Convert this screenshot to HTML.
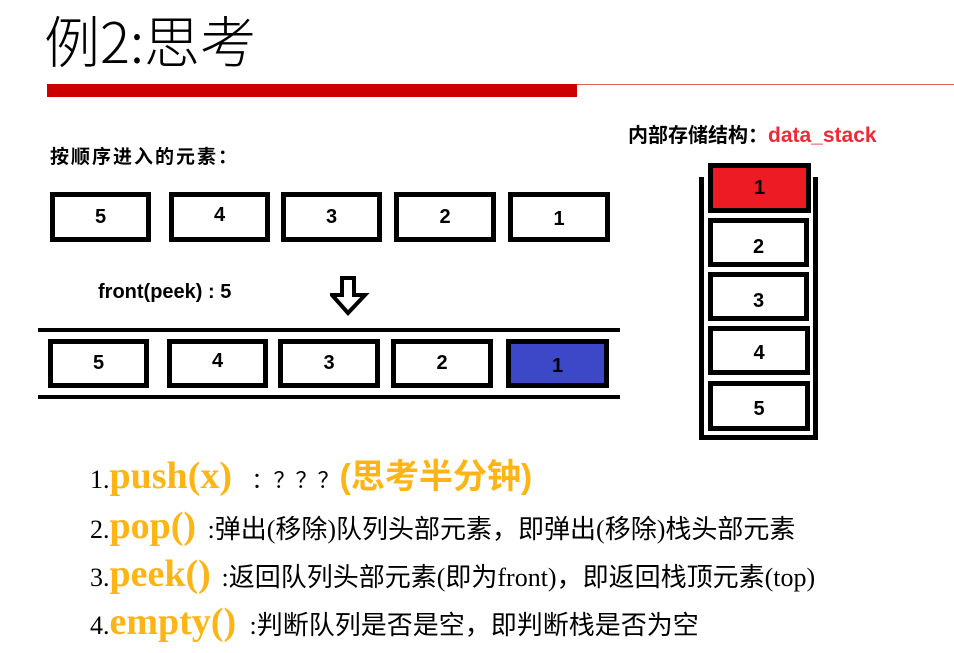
<!DOCTYPE html>
<html><head><meta charset="utf-8"><style>
body{margin:0;width:954px;height:653px;background:#fff;position:relative;overflow:hidden;font-family:"Liberation Sans","Noto Sans CJK SC",sans-serif}
.a{position:absolute}
.b{position:absolute;box-sizing:border-box;border:5px solid #000;background:#fff;text-align:center;font-weight:bold;font-size:20px;font-family:"Liberation Sans",sans-serif}
.l{position:absolute;background:#000}
.t{position:absolute;white-space:nowrap;font-family:"Liberation Serif","Noto Sans CJK SC",sans-serif;font-size:26px;color:#000}
.o{color:#fdb515;font-weight:bold;font-family:"Liberation Serif",serif;display:inline-block}
</style></head><body>
<div class="a" style="left:44px;top:-1px;font-size:56px;font-family:'Noto Sans CJK SC',sans-serif;font-weight:300">例2:思考</div>
<div class="a" style="left:47px;top:84px;width:530px;height:13px;background:#cc0000"></div>
<div class="a" style="left:577px;top:84px;width:377px;height:1px;background:#e06060"></div>
<div class="a" style="left:50px;top:142px;font-size:19px;font-weight:bold;letter-spacing:2px">按顺序进入的元素：</div>

<div class="b" style="left:50px;top:192px;width:101px;height:50px;line-height:40px">5</div>
<div class="b" style="left:169px;top:192px;width:101px;height:50px;line-height:36px">4</div>
<div class="b" style="left:281px;top:192px;width:101px;height:50px;line-height:40px">3</div>
<div class="b" style="left:394px;top:192px;width:102px;height:50px;line-height:40px">2</div>
<div class="b" style="left:508px;top:192px;width:102px;height:50px;line-height:44px">1</div>

<div class="a" style="left:98px;top:281px;font-size:20px;font-weight:bold">front(peek) : 5</div>
<svg class="a" style="left:330px;top:275px" width="44" height="42"><path d="M12 3 H24 V20 H35 L18 38 L2 20 H12 Z" fill="#fff" stroke="#000" stroke-width="4" stroke-linejoin="miter"/></svg>

<div class="l" style="left:38px;top:328px;width:582px;height:4px"></div>
<div class="l" style="left:38px;top:395px;width:582px;height:4px"></div>
<div class="b" style="left:48px;top:339px;width:101px;height:49px;line-height:39px">5</div>
<div class="b" style="left:167px;top:339px;width:101px;height:49px;line-height:35px">4</div>
<div class="b" style="left:278px;top:339px;width:102px;height:49px;line-height:39px">3</div>
<div class="b" style="left:391px;top:339px;width:102px;height:49px;line-height:39px">2</div>
<div class="b" style="left:506px;top:339px;width:103px;height:49px;line-height:45px;background:#3c48c8">1</div>

<div class="a" style="left:628px;top:119px;font-size:20px;font-weight:bold">内部存储结构：<span style="color:#ee2a36;font-size:21px">data_stack</span></div>
<div class="l" style="left:699px;top:177px;width:5px;height:263px"></div>
<div class="l" style="left:813px;top:177px;width:5px;height:263px"></div>
<div class="l" style="left:699px;top:435px;width:119px;height:5px"></div>
<div class="b" style="left:708px;top:163px;width:103px;height:50px;line-height:40px;background:#ed1c24">1</div>
<div class="b" style="left:708px;top:218px;width:101px;height:49px;line-height:49px">2</div>
<div class="b" style="left:708px;top:272px;width:101px;height:49px;line-height:49px">3</div>
<div class="b" style="left:708px;top:326px;width:102px;height:49px;line-height:44px">4</div>
<div class="b" style="left:708px;top:381px;width:102px;height:50px;line-height:46px">5</div>

<div class="t" style="left:90px;top:454px;line-height:44px">1.<span class="o" style="font-size:38px;width:142px">push(x)</span><span style="font-size:22px">：？？？</span><span class="o" style="font-size:34px;font-family:'Liberation Sans','Noto Sans CJK SC',sans-serif">(思考半分钟)</span></div>
<div class="t" style="left:90px;top:505px;line-height:42px">2.<span class="o" style="font-size:38px;width:98px">pop()</span>:弹出(移除)队列头部元素，即弹出(移除)栈头部元素</div>
<div class="t" style="left:90px;top:553px;line-height:42px">3.<span class="o" style="font-size:38px;width:112px">peek()</span>:返回队列头部元素(即为front)，即返回栈顶元素(top)</div>
<div class="t" style="left:90px;top:601px;line-height:42px">4.<span class="o" style="font-size:38px;width:140px">empty()</span>:判断队列是否是空，即判断栈是否为空</div>
</body></html>
